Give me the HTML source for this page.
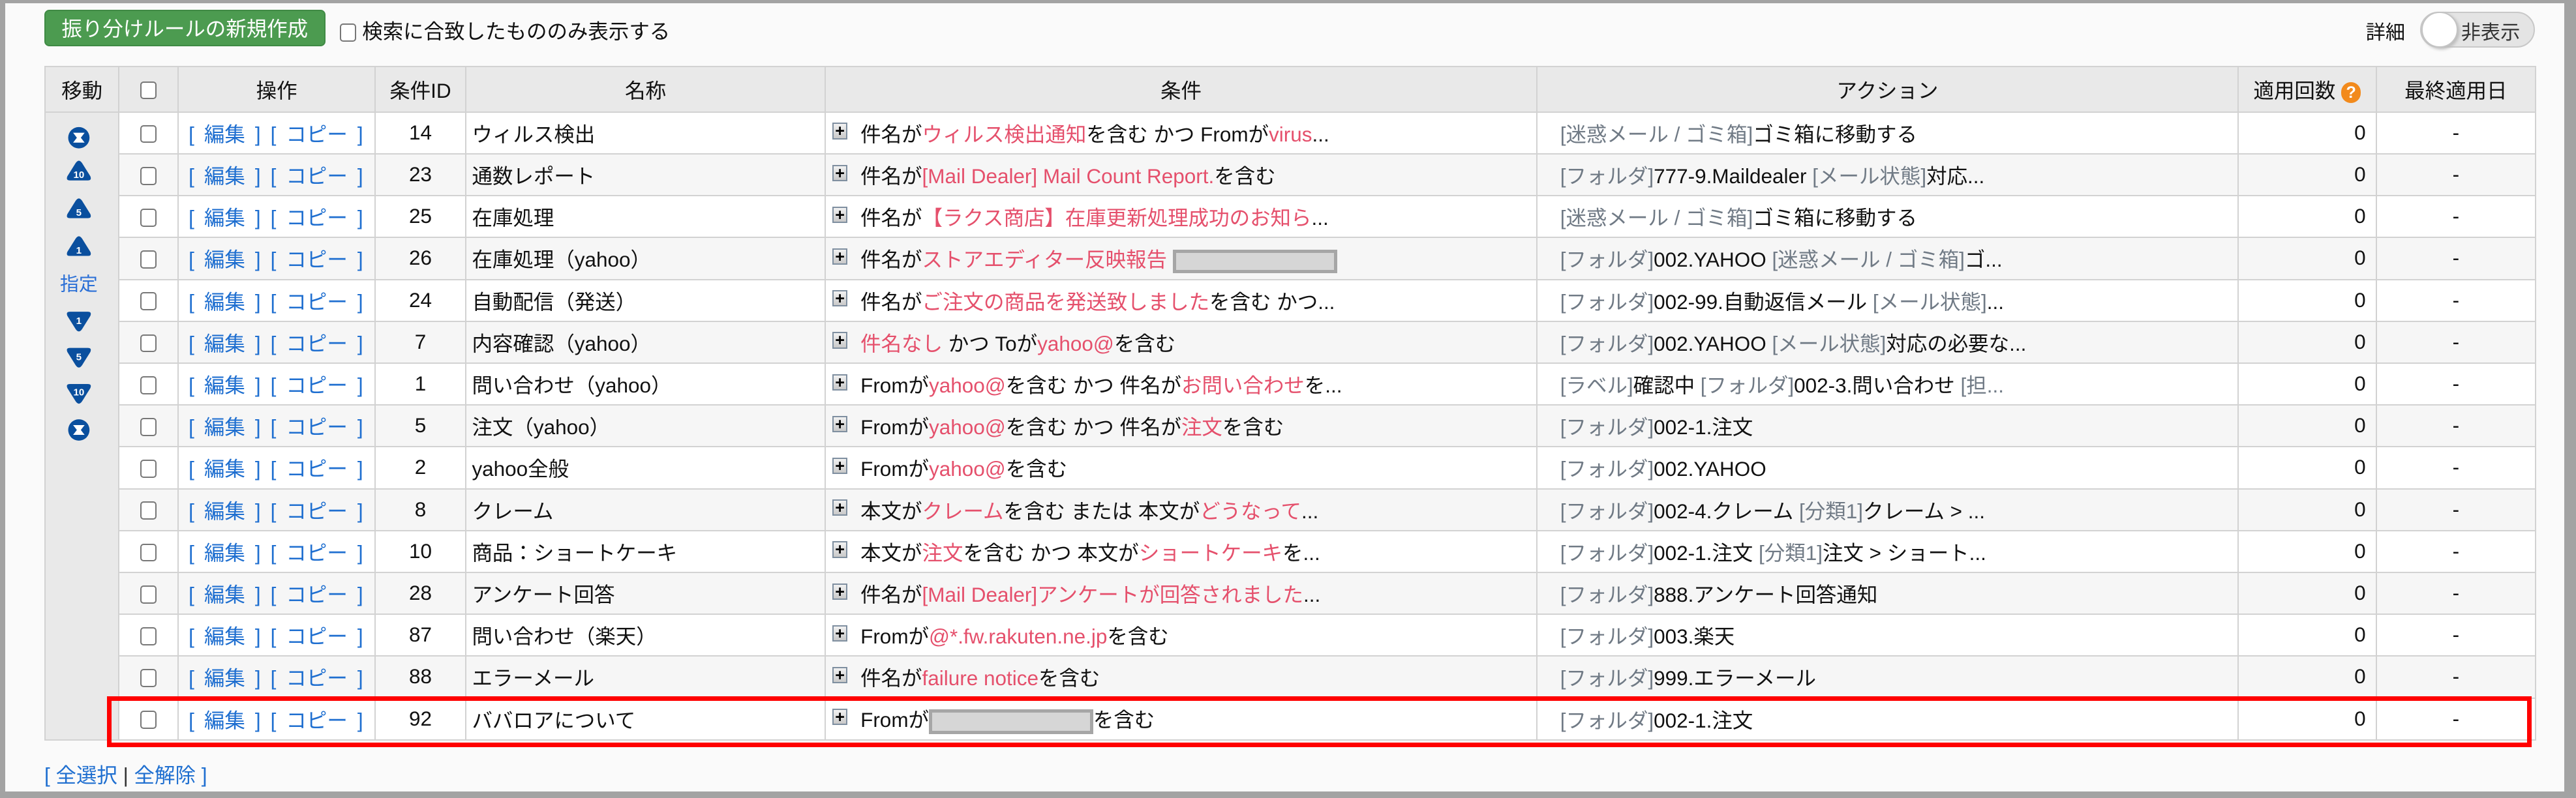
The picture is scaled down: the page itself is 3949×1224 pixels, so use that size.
<!DOCTYPE html>
<html><head><meta charset="utf-8">
<style>
html,body{margin:0;padding:0;}
body{zoom:2.51849;width:1568px;height:486px;overflow:hidden;background:#a3a3a3;position:relative;font-family:"Liberation Sans","Noto Sans CJK JP",sans-serif;font-size:12.5px;color:#111;}
#frame{position:absolute;left:3px;top:2px;width:1558px;height:480px;background:#fafafa;}
.abs{position:absolute;}
#btn{left:27px;top:6px;width:171px;height:22px;background:#4c9b50;border:1px solid #3f8a44;border-radius:3px;color:#fff;font-size:12.5px;line-height:22px;text-align:center;box-sizing:border-box;}
.cb{display:inline-block;width:10px;height:11px;border:1px solid #777;border-radius:2px;background:#fff;box-sizing:border-box;vertical-align:middle;}
table{position:absolute;left:27px;top:40px;border-collapse:collapse;table-layout:fixed;width:1516px;}
td,th{border:1px solid #d2d2d2;padding:0;white-space:nowrap;overflow:hidden;font-weight:normal;}
th{background:#e9e9e9;height:27px;font-size:12.5px;}
tr.r td{height:24.7px;}
tr.r:nth-child(odd) td{background:#f6f6f6;}
tr.r:nth-child(even) td{background:#fff;}
td.mv{background:#e9e9e9 !important;}
.c{text-align:center;}
.lk{color:#1f6fd0;}
td.lk{word-spacing:2.5px;padding-left:6px;}
.red{color:#e5506c;}
.g{color:#707a85;}
.pl{display:inline-block;width:9px;height:10px;border:1px solid #7f8fa0;background:linear-gradient(#f2f2f2,#c9c9c9);font-size:10px;line-height:9px;text-align:center;vertical-align:top;margin:3px 8px 0 4px;box-sizing:border-box;color:#000;font-weight:bold;}
.blk{display:inline-block;background:#d6d6d6;border:2px solid #a6a6a6;vertical-align:middle;box-sizing:border-box;}
</style></head><body>
<div id="frame"></div>
<div class="abs" id="btn">振り分けルールの新規作成</div>
<div class="abs" style="left:207px;top:9px;font-size:12.5px;"><span class="cb"></span> 検索に合致したもののみ表示する</div>
<div class="abs" style="left:1440px;top:10px;font-size:12px;">詳細</div>
<div class="abs" style="left:1473px;top:7px;width:70px;height:22px;border-radius:11px;background:#e4e4e4;border:1px solid #c8c8c8;box-sizing:border-box;"></div>
<div class="abs" style="left:1474px;top:7px;width:22px;height:22px;border-radius:11px;background:#fff;border:1px solid #c4c4c4;box-sizing:border-box;box-shadow:1px 1px 2px #bbb;"></div>
<div class="abs" style="left:1498px;top:10px;font-size:12px;color:#333;">非表示</div>

<table>
<colgroup><col style="width:45px"><col style="width:36px"><col style="width:120px"><col style="width:55px"><col style="width:219px"><col style="width:433px"><col style="width:427px"><col style="width:84px"><col style="width:97px"></colgroup>
<tr><th>移動</th><th><span class="cb"></span></th><th>操作</th><th>条件ID</th><th>名称</th><th>条件</th><th>アクション</th><th>適用回数 <span style="display:inline-block;width:12px;height:13px;border-radius:6px;background:#f28a1c;color:#fff;font-size:10px;line-height:13px;font-weight:bold;">?</span></th><th>最終適用日</th></tr>
<tr class="r"><td class="mv" rowspan="15"></td>
<td class="c"><span class="cb"></span></td><td class="lk">[ 編集 ] [ コピー ]</td><td class="c">14</td><td>&nbsp;ウィルス検出</td><td><span class="pl">+</span>件名が<span class="red">ウィルス検出通知</span>を含む かつ Fromが<span class="red">virus</span>...</td><td>&nbsp;&nbsp;&nbsp;&nbsp;<span class="g">[迷惑メール / ゴミ箱]</span>ゴミ箱に移動する</td><td style="text-align:right;padding-right:6px">0</td><td class="c">-</td></tr>
<tr class="r"><td class="c"><span class="cb"></span></td><td class="lk">[ 編集 ] [ コピー ]</td><td class="c">23</td><td>&nbsp;通数レポート</td><td><span class="pl">+</span>件名が<span class="red">[Mail Dealer] Mail Count Report.</span>を含む</td><td>&nbsp;&nbsp;&nbsp;&nbsp;<span class="g">[フォルダ]</span>777-9.Maildealer <span class="g">[メール状態]</span>対応...</td><td style="text-align:right;padding-right:6px">0</td><td class="c">-</td></tr>
<tr class="r"><td class="c"><span class="cb"></span></td><td class="lk">[ 編集 ] [ コピー ]</td><td class="c">25</td><td>&nbsp;在庫処理</td><td><span class="pl">+</span>件名が<span class="red">【ラクス商店】在庫更新処理成功のお知ら</span>...</td><td>&nbsp;&nbsp;&nbsp;&nbsp;<span class="g">[迷惑メール / ゴミ箱]</span>ゴミ箱に移動する</td><td style="text-align:right;padding-right:6px">0</td><td class="c">-</td></tr>
<tr class="r"><td class="c"><span class="cb"></span></td><td class="lk">[ 編集 ] [ コピー ]</td><td class="c">26</td><td>&nbsp;在庫処理（yahoo）</td><td><span class="pl">+</span>件名が<span class="red">ストアエディター反映報告</span> <span class="blk" style="width:100px;height:14px"></span></td><td>&nbsp;&nbsp;&nbsp;&nbsp;<span class="g">[フォルダ]</span>002.YAHOO <span class="g">[迷惑メール / ゴミ箱]</span>ゴ...</td><td style="text-align:right;padding-right:6px">0</td><td class="c">-</td></tr>
<tr class="r"><td class="c"><span class="cb"></span></td><td class="lk">[ 編集 ] [ コピー ]</td><td class="c">24</td><td>&nbsp;自動配信（発送）</td><td><span class="pl">+</span>件名が<span class="red">ご注文の商品を発送致しました</span>を含む かつ...</td><td>&nbsp;&nbsp;&nbsp;&nbsp;<span class="g">[フォルダ]</span>002-99.自動返信メール <span class="g">[メール状態]</span>...</td><td style="text-align:right;padding-right:6px">0</td><td class="c">-</td></tr>
<tr class="r"><td class="c"><span class="cb"></span></td><td class="lk">[ 編集 ] [ コピー ]</td><td class="c">7</td><td>&nbsp;内容確認（yahoo）</td><td><span class="pl">+</span><span class="red">件名なし</span> かつ Toが<span class="red">yahoo@</span>を含む</td><td>&nbsp;&nbsp;&nbsp;&nbsp;<span class="g">[フォルダ]</span>002.YAHOO <span class="g">[メール状態]</span>対応の必要な...</td><td style="text-align:right;padding-right:6px">0</td><td class="c">-</td></tr>
<tr class="r"><td class="c"><span class="cb"></span></td><td class="lk">[ 編集 ] [ コピー ]</td><td class="c">1</td><td>&nbsp;問い合わせ（yahoo）</td><td><span class="pl">+</span>Fromが<span class="red">yahoo@</span>を含む かつ 件名が<span class="red">お問い合わせ</span>を...</td><td>&nbsp;&nbsp;&nbsp;&nbsp;<span class="g">[ラベル]</span>確認中 <span class="g">[フォルダ]</span>002-3.問い合わせ <span class="g">[担...</span></td><td style="text-align:right;padding-right:6px">0</td><td class="c">-</td></tr>
<tr class="r"><td class="c"><span class="cb"></span></td><td class="lk">[ 編集 ] [ コピー ]</td><td class="c">5</td><td>&nbsp;注文（yahoo）</td><td><span class="pl">+</span>Fromが<span class="red">yahoo@</span>を含む かつ 件名が<span class="red">注文</span>を含む</td><td>&nbsp;&nbsp;&nbsp;&nbsp;<span class="g">[フォルダ]</span>002-1.注文</td><td style="text-align:right;padding-right:6px">0</td><td class="c">-</td></tr>
<tr class="r"><td class="c"><span class="cb"></span></td><td class="lk">[ 編集 ] [ コピー ]</td><td class="c">2</td><td>&nbsp;yahoo全般</td><td><span class="pl">+</span>Fromが<span class="red">yahoo@</span>を含む</td><td>&nbsp;&nbsp;&nbsp;&nbsp;<span class="g">[フォルダ]</span>002.YAHOO</td><td style="text-align:right;padding-right:6px">0</td><td class="c">-</td></tr>
<tr class="r"><td class="c"><span class="cb"></span></td><td class="lk">[ 編集 ] [ コピー ]</td><td class="c">8</td><td>&nbsp;クレーム</td><td><span class="pl">+</span>本文が<span class="red">クレーム</span>を含む または 本文が<span class="red">どうなって</span>...</td><td>&nbsp;&nbsp;&nbsp;&nbsp;<span class="g">[フォルダ]</span>002-4.クレーム <span class="g">[分類1]</span>クレーム &gt; ...</td><td style="text-align:right;padding-right:6px">0</td><td class="c">-</td></tr>
<tr class="r"><td class="c"><span class="cb"></span></td><td class="lk">[ 編集 ] [ コピー ]</td><td class="c">10</td><td>&nbsp;商品：ショートケーキ</td><td><span class="pl">+</span>本文が<span class="red">注文</span>を含む かつ 本文が<span class="red">ショートケーキ</span>を...</td><td>&nbsp;&nbsp;&nbsp;&nbsp;<span class="g">[フォルダ]</span>002-1.注文 <span class="g">[分類1]</span>注文 &gt; ショート...</td><td style="text-align:right;padding-right:6px">0</td><td class="c">-</td></tr>
<tr class="r"><td class="c"><span class="cb"></span></td><td class="lk">[ 編集 ] [ コピー ]</td><td class="c">28</td><td>&nbsp;アンケート回答</td><td><span class="pl">+</span>件名が<span class="red">[Mail Dealer]アンケートが回答されました</span>...</td><td>&nbsp;&nbsp;&nbsp;&nbsp;<span class="g">[フォルダ]</span>888.アンケート回答通知</td><td style="text-align:right;padding-right:6px">0</td><td class="c">-</td></tr>
<tr class="r"><td class="c"><span class="cb"></span></td><td class="lk">[ 編集 ] [ コピー ]</td><td class="c">87</td><td>&nbsp;問い合わせ（楽天）</td><td><span class="pl">+</span>Fromが<span class="red">@*.fw.rakuten.ne.jp</span>を含む</td><td>&nbsp;&nbsp;&nbsp;&nbsp;<span class="g">[フォルダ]</span>003.楽天</td><td style="text-align:right;padding-right:6px">0</td><td class="c">-</td></tr>
<tr class="r"><td class="c"><span class="cb"></span></td><td class="lk">[ 編集 ] [ コピー ]</td><td class="c">88</td><td>&nbsp;エラーメール</td><td><span class="pl">+</span>件名が<span class="red">failure notice</span>を含む</td><td>&nbsp;&nbsp;&nbsp;&nbsp;<span class="g">[フォルダ]</span>999.エラーメール</td><td style="text-align:right;padding-right:6px">0</td><td class="c">-</td></tr>
<tr class="r"><td class="c"><span class="cb"></span></td><td class="lk">[ 編集 ] [ コピー ]</td><td class="c">92</td><td>&nbsp;ババロアについて</td><td><span class="pl">+</span>Fromが<span class="blk" style="width:100px;height:15px"></span>を含む</td><td>&nbsp;&nbsp;&nbsp;&nbsp;<span class="g">[フォルダ]</span>002-1.注文</td><td style="text-align:right;padding-right:6px">0</td><td class="c">-</td></tr>
</table>
<svg class="abs" style="left:27px;top:72px;width:45px;height:200px;" width="45" height="200" viewBox="0 0 45 200">
<g fill="#0a4f9e">
<circle cx="21" cy="12" r="6.5"/>
<path d="M21 26 Q22 26 23 27.5 L28 35.5 Q29 38 26.5 38 L15.5 38 Q13 38 14 35.5 L19 27.5 Q20 26 21 26 Z"/>
<path d="M21 49 Q22 49 23 50.5 L28 58.5 Q29 61 26.5 61 L15.5 61 Q13 61 14 58.5 L19 50.5 Q20 49 21 49 Z"/>
<path d="M21 72 Q22 72 23 73.5 L28 81.5 Q29 84 26.5 84 L15.5 84 Q13 84 14 81.5 L19 73.5 Q20 72 21 72 Z"/>
<path d="M21 130 Q22 130 23 128.5 L28 120.5 Q29 118 26.5 118 L15.5 118 Q13 118 14 120.5 L19 128.5 Q20 130 21 130 Z"/>
<path d="M21 152 Q22 152 23 150.5 L28 142.5 Q29 140 26.5 140 L15.5 140 Q13 140 14 142.5 L19 150.5 Q20 152 21 152 Z"/>
<path d="M21 174 Q22 174 23 172.5 L28 164.5 Q29 162 26.5 162 L15.5 162 Q13 162 14 164.5 L19 172.5 Q20 174 21 174 Z"/>
<circle cx="21" cy="190" r="6.5"/>
</g>
<g fill="#fff" font-size="6" font-family="Liberation Sans" text-anchor="middle" font-weight="bold">
<path d="M17.5 9 h7 l-2.3 3 l2.3 3 h-7 l2.3 -3z"/>
<text x="21" y="36.5">10</text><text x="21" y="59.5">5</text><text x="21" y="82.5">1</text>
<text x="21" y="125.5">1</text><text x="21" y="147.5">5</text><text x="21" y="169">10</text>
<path d="M17.5 187 h7 l-2.3 3 l2.3 3 h-7 l2.3 -3z"/>
</g>
<text x="21" y="105" fill="#2a6fd6" font-size="11.5" text-anchor="middle" font-family="Noto Sans CJK JP">指定</text>
</svg>
<div class="abs" style="left:65px;top:424px;width:1476px;height:31px;border:3px solid #f00;box-sizing:border-box;"></div>
<div class="abs lk" style="left:27px;top:462px;font-size:12.5px;">[ 全選択 <span style="color:#333">|</span> 全解除 ]</div>
</body></html>
